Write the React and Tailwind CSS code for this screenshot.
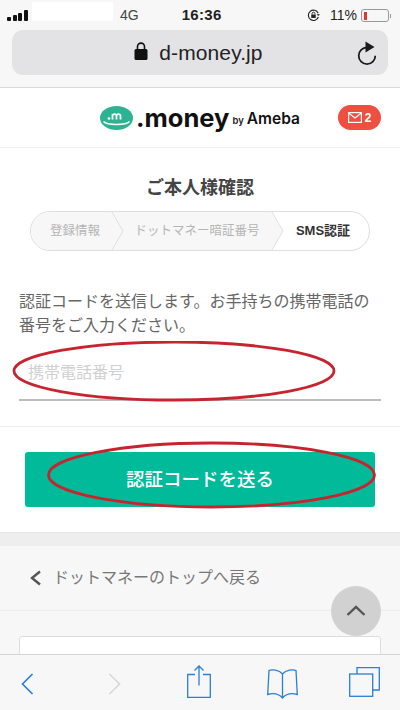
const jp = "font-['Liberation_Sans','Noto_Sans_CJK_JP',sans-serif]"

function StatusBar() {
  return (
    <div className="relative flex h-[30px] items-center pl-[7px] pr-[11px] pt-[1px] text-[#222]">
      <div className="flex items-end gap-[1.5px] pb-[1px]">
        <span className="h-[4px] w-[4px] rounded-[1px] bg-[#111]" />
        <span className="h-[6px] w-[4px] rounded-[1px] bg-[#111]" />
        <span className="h-[8px] w-[4px] rounded-[1px] bg-[#111]" />
        <span className="h-[11px] w-[4px] rounded-[1px] bg-[#111]" />
      </div>
      <div className="ml-[4px] mt-[1px] h-[19px] w-[81px] self-start bg-white" />
      <span className="ml-[7.5px] text-[14px] text-[#444]">4G</span>
      <span className="ml-[43px] text-[15px] font-bold tracking-[0.3px]">16:36</span>
      <svg className="ml-auto" width="15" height="15" viewBox="0 0 16 16" fill="none" stroke="#222" strokeWidth="1.2">
        <path d="M13.2 9.6A5.5 5.5 0 1 1 13 5.5" />
        <path d="M15 6.6l-2 2-1.6-2z" fill="#222" stroke="none" />
        <rect x="5.6" y="7" width="4.8" height="3.6" fill="#222" stroke="none" />
        <path d="M6.5 7V6a1.5 1.5 0 0 1 3 0v1" strokeWidth="1" />
      </svg>
      <span className="ml-[9px] text-[14px]">11%</span>
      <div className="relative ml-[4px] flex h-[13px] w-[28px] items-center rounded-[3px] border border-[#999] pl-[2px]">
        <span className="h-[8px] w-[3px] bg-[#e8352b]" />
        <span className="absolute -right-[3px] h-[4px] w-[1.5px] bg-[#999]" />
      </div>
    </div>
  )
}

function UrlBar() {
  return (
    <div className="relative mx-[12px] flex h-[45px] items-center justify-center rounded-[11px] bg-[#e3e3e6] pr-[3px]">
      <svg className="mb-[3px] mr-[11px]" width="14" height="18" viewBox="0 0 14 18">
        <rect x="0.5" y="7" width="13" height="11" rx="1.5" fill="#111" />
        <path d="M3.5 7V4.6a3.5 3.5 0 0 1 7 0V7" fill="none" stroke="#111" strokeWidth="1.6" />
      </svg>
      <span className="text-[21px] tracking-[0.1px] text-[#222]">d-money.jp</span>
      <svg className="absolute right-[10px] top-[10px]" width="22" height="25" viewBox="0 0 22 25" fill="none">
        <path d="M11 7.500A8.300 8.300 0 1 0 19.300 15.800" stroke="#1b1b1b" strokeWidth="1.8" />
        <path d="M9.500 1.500l9 5.500-9 5.500z" fill="#1b1b1b" />
      </svg>
    </div>
  )
}

function Logo() {
  return (
    <div className="flex items-center">
      <svg width="33" height="24" viewBox="0 0 33 24">
        <ellipse cx="16.500" cy="12" rx="16.500" ry="12" fill="#2db391" />
        <path d="M3.500 15.500c4 4 22 4 26 0" fill="none" stroke="#fff" strokeWidth="1.6" />
        <circle cx="9" cy="12.500" r="1.300" fill="#fff" />
        <path d="M12.500 13.500V8M12.500 10c0-2.600 4-2.600 4 0v3.500M16.500 10c0-2.600 4-2.600 4 0v3.500" fill="none" stroke="#fff" strokeWidth="1.800" />
      </svg>
      <span className="ml-[3px] font-['Inter',sans-serif] text-[25.500px] font-bold leading-none text-[#111]">.money</span>
      <span className="ml-[3px] mt-[7px] font-['Inter',sans-serif] text-[9.500px] font-semibold text-[#222]">by</span>
      <span className="ml-[3px] mt-[3px] font-['Inter',sans-serif] text-[15.500px] font-semibold text-[#111]">Ameba</span>
    </div>
  )
}

function Stepper() {
  return (
    <div className="relative mx-[30px] mt-[11px] flex h-[40px] items-center overflow-hidden rounded-full border border-[#dedede] text-[12.500px]">
      <div className="flex h-full w-[86px] items-center justify-center bg-[#f7f7f7] pl-[2px] text-[#b5b5b5]">登録情報</div>
      <div className="flex h-full w-[155px] items-center justify-center bg-[#f7f7f7] pl-[5px] text-[#b5b5b5]">ドットマネー暗証番号</div>
      <div className="flex h-full flex-1 items-center justify-center pl-[5px] text-[13px] font-bold text-[#333]">SMS認証</div>
      <svg className="absolute left-[80px] top-0 h-full w-[14px]" viewBox="0 0 14 38" preserveAspectRatio="none" fill="none" stroke="#e0e0e0">
        <path d="M1 0l11 19L1 38" />
      </svg>
      <svg className="absolute left-[240px] top-0 h-full w-[14px]" viewBox="0 0 14 38" preserveAspectRatio="none" fill="#f7f7f7" stroke="#e0e0e0">
        <path d="M1 0l11 19L1 38" />
      </svg>
    </div>
  )
}

function Toolbar() {
  return (
    <div className="absolute inset-x-0 bottom-0 flex h-[56px] items-start border-t border-[#d4d4d4] bg-[#f7f7f7]">
      <svg className="ml-[21px] mt-[18px]" width="13" height="22" viewBox="0 0 13 22" fill="none" stroke="#2a7fd8" strokeWidth="1.700">
        <path d="M11.500 1L1.500 11l10 10" />
      </svg>
      <svg className="ml-[74px] mt-[18px]" width="13" height="22" viewBox="0 0 13 22" fill="none" stroke="#d8d8d8" strokeWidth="1.700">
        <path d="M1.500 1l10 10-10 10" />
      </svg>
      <svg className="ml-[66px] mt-[10px]" width="24" height="33" viewBox="0 0 24 33" fill="none" stroke="#2a7fd8" strokeWidth="1.300">
        <path d="M8 9.500H.7v22.800h22.600V9.500H16" />
        <path d="M12 20.500V1M7.500 5.500L12 1l4.500 4.500" />
      </svg>
      <svg className="ml-[56px] mt-[14px]" width="31" height="30" viewBox="0 0 31 30" fill="none" stroke="#2a7fd8" strokeWidth="1.300">
        <path d="M15.500 5C12 1 5 0 2 1.500L.7 25.500C6 24 12 25 15.500 29 19 25 25 24 30.300 25.500L29 1.500C26 0 19 1 15.500 5zM15.500 5v24" />
      </svg>
      <svg className="ml-[51px] mt-[12px]" width="31" height="30" viewBox="0 0 31 30" fill="none" stroke="#2a7fd8" strokeWidth="1.300">
        <rect x="0.700" y="7" width="23" height="22.300" />
        <path d="M8 7V.7h22.300v22.300H23.700" />
      </svg>
    </div>
  )
}

export default function App() {
  return (
    <div className={`relative h-[710px] w-[400px] overflow-hidden bg-[#f7f7f7] ${jp}`}>
      <div className="h-[88px] border-b border-[#d8d8d8] bg-[#f7f7f7]">
        <StatusBar />
        <UrlBar />
      </div>

      <div className="relative flex h-[60px] items-center border-b border-[#eeeeee] bg-white pl-[100px]">
        <Logo />
        <div className="absolute right-[19px] top-[17px] flex h-[25px] w-[43px] items-center justify-center gap-[3px] rounded-full bg-[#ee4f41]">
          <svg width="14" height="11" viewBox="0 0 14 11" fill="none" stroke="#fff" strokeWidth="1.200">
            <rect x="0.600" y="0.600" width="12.800" height="9.800" />
            <path d="M0.600 1l6.400 5 6.400-5" />
          </svg>
          <span className="text-[12px] font-bold text-white">2</span>
        </div>
      </div>

      <div className="bg-white">
        <div className="border-b border-[#eeeeee] pb-[25px]">
          <h1 className="pt-[28px] text-center text-[18px] font-bold leading-[24px] text-[#444]">ご本人様確認</h1>
          <Stepper />
          <p className="mx-[19px] mt-[39px] text-[16px] leading-[24px] text-[#666]">
            認証コードを送信します。お手持ちの携帯電話の番号をご入力ください。
          </p>
          <div className="relative mx-[19px] mt-[14px] flex h-[49px] items-center border-b-2 border-[#bdbdbd] pb-[6px] pl-[9px] text-[16px] text-[#d0d0d0]">
            携帯電話番号
            <svg className="absolute -left-[7px] -top-[11px]" width="325" height="62" viewBox="0 0 325 62" fill="none">
              <ellipse cx="162" cy="30" rx="160" ry="29" stroke="#c8242f" strokeWidth="2.800" />
            </svg>
          </div>
        </div>

        <div className="p-[25px]">
          <div className="relative flex h-[55px] items-center justify-center rounded-[3px] bg-[#00ba9a] text-[18.500px] font-medium text-white">
            認証コードを送る
            <svg className="absolute -top-[11px] left-[21px]" width="332" height="68" viewBox="0 0 332 68" fill="none">
              <ellipse cx="165.500" cy="34" rx="163" ry="32" stroke="#c8242f" strokeWidth="2.800" />
            </svg>
          </div>
        </div>
      </div>

      <div className="h-[14px] border-t border-[#e6e6e6] bg-[#eeeeee]" />

      <div className="flex h-[65px] items-center border-b border-[#ececec] pl-[30px] text-[16px] text-[#777]">
        <svg className="mr-[11px]" width="12" height="16" viewBox="0 0 12 16" fill="none" stroke="#555" strokeWidth="2.400">
          <path d="M10 1.500L2 8l8 6.500" />
        </svg>
        ドットマネーのトップへ戻る
      </div>

      <div className="mx-[19px] mt-[25px] h-[40px] rounded-[3px] border border-[#dddddd] bg-white" />

      <div className="absolute left-[331px] top-[586px] flex h-[50px] w-[50px] items-center justify-center rounded-full bg-[#cfcfcf]/95">
        <svg width="20" height="12" viewBox="0 0 20 12" fill="none" stroke="#555" strokeWidth="2.400">
          <path d="M1.500 10L10 2l8.500 8" />
        </svg>
      </div>

      <Toolbar />
    </div>
  )
}
